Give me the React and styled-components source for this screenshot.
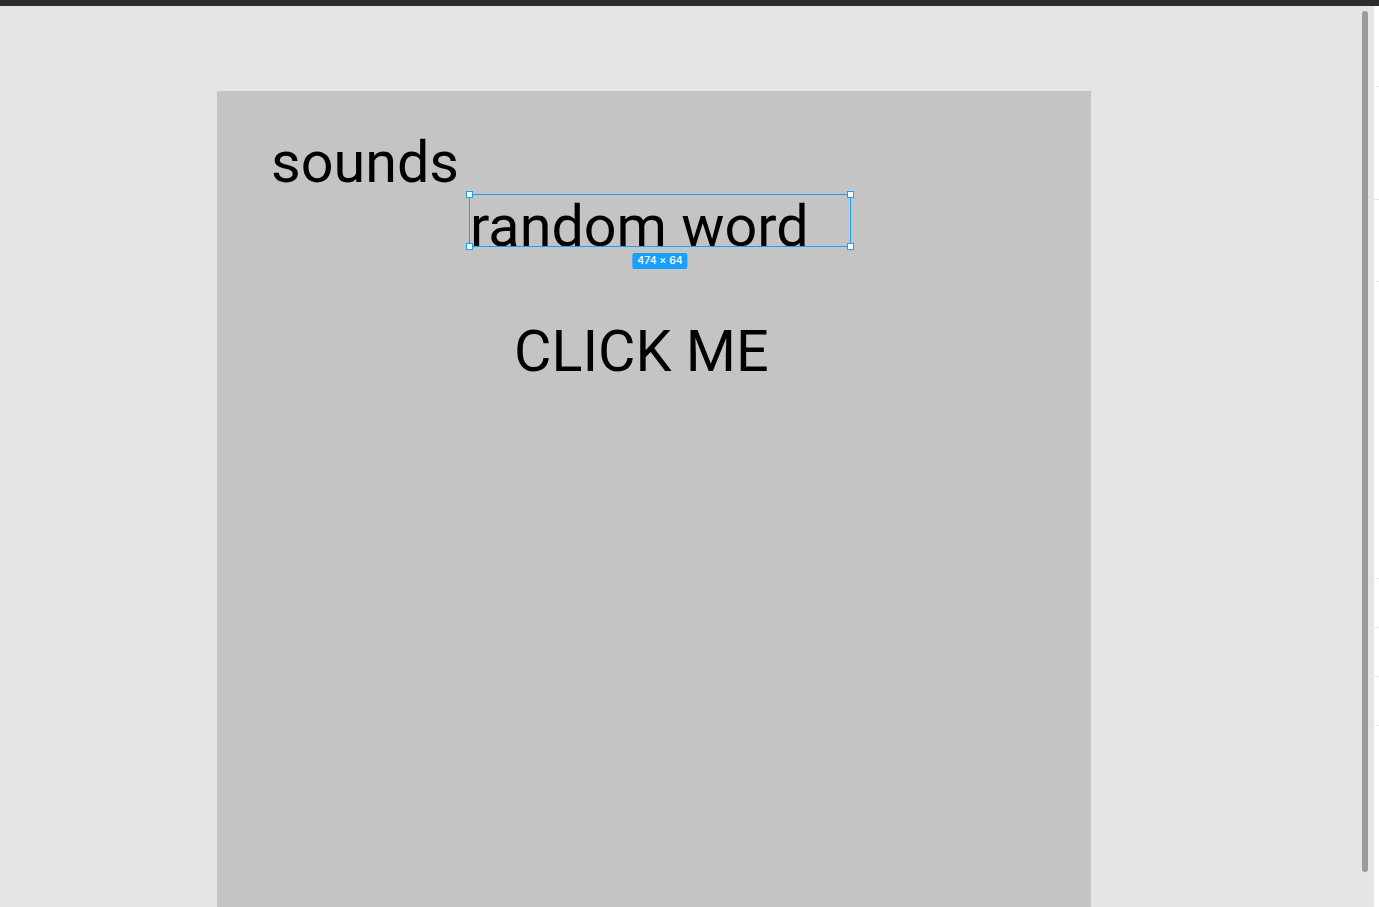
import React from "react";
import styled, { createGlobalStyle } from "styled-components";

const Global = createGlobalStyle`
  html, body { margin: 0; padding: 0; overflow: hidden; background: #e5e5e5; }
  #root { height: 100vh; }
`;

const Page = styled.div`
  display: flex;
  flex-direction: column;
  height: 100vh;
  background: #e5e5e5;
`;

const TopBar = styled.div`
  flex: 0 0 6px;
  background: #2c2c2c;
`;

const Workspace = styled.div`
  flex: 1;
  display: flex;
  min-height: 0;
`;

const Canvas = styled.div`
  flex: 1;
  display: flex;
  flex-direction: column;
  padding: 85px 0 0 217px;
  overflow: hidden;
`;

const Frame = styled.div`
  position: relative;
  width: 874px;
  flex: 1;
  background: #c4c4c4;
  display: flex;
  flex-direction: column;
  align-items: flex-start;
  padding-top: 40px;
  box-sizing: border-box;
`;

const TextLayer = styled.div`
  font-family: Roboto, "Noto Sans", sans-serif;
  font-size: 57.5px;
  line-height: 64px;
  color: #000;
  white-space: nowrap;
  margin-left: ${(p) => p.$x}px;
  margin-top: ${(p) => p.$mt || 0}px;
`;

const Selection = styled.div`
  position: absolute;
  left: 252px;
  top: 103px;
  width: 382px;
  height: 53px;
  box-sizing: border-box;
  border: 1px solid #18a0fb;
  pointer-events: none;
`;

const Handle = styled.span`
  position: absolute;
  width: 7px;
  height: 7px;
  box-sizing: border-box;
  background: #fff;
  border: 1px solid #18a0fb;
  ${(p) => (p.$v === "top" ? "top: -4px;" : "bottom: -4px;")}
  ${(p) => (p.$h === "left" ? "left: -4px;" : "right: -4px;")}
`;

const SizeLabel = styled.div`
  position: absolute;
  top: calc(100% + 7px);
  left: 50%;
  transform: translateX(-50%);
  height: 16px;
  padding: 0 5px;
  border-radius: 2px;
  background: #18a0fb;
  color: #fff;
  font-family: Inter, "Noto Sans", sans-serif;
  font-size: 10.5px;
  font-weight: 500;
  line-height: 16px;
  white-space: nowrap;
`;

const ScrollColumn = styled.div`
  flex: 0 0 12px;
  display: flex;
  flex-direction: column;
  padding-top: 5px;
`;

const ScrollThumb = styled.div`
  width: 6px;
  height: 861px;
  border-radius: 3px;
  background: #9c9c9c;
`;

const SidePanel = styled.div`
  flex: 0 0 5px;
  background: #ffffff;
  display: flex;
  flex-direction: column;
`;

const PanelSection = styled.div`
  flex: 0 0 ${(p) => p.$h}px;
  border-bottom: 1px solid #e5e5e5;
`;

const sections = [80, 112, 81, 296, 48, 48, 48];

export default function App() {
  return (
    <>
      <Global />
      <Page>
        <TopBar />
        <Workspace>
          <Canvas>
            <Frame>
              <TextLayer $x={54}>sounds</TextLayer>
              <TextLayer $x={253}>random word</TextLayer>
              <TextLayer $x={297} $mt={61}>CLICK ME</TextLayer>
              <Selection>
                <Handle $v="top" $h="left" />
                <Handle $v="top" $h="right" />
                <Handle $v="bottom" $h="left" />
                <Handle $v="bottom" $h="right" />
                <SizeLabel>474 × 64</SizeLabel>
              </Selection>
            </Frame>
          </Canvas>
          <ScrollColumn>
            <ScrollThumb />
          </ScrollColumn>
          <SidePanel>
            {sections.map((h, i) => (
              <PanelSection key={i} $h={h} />
            ))}
          </SidePanel>
        </Workspace>
      </Page>
    </>
  );
}
